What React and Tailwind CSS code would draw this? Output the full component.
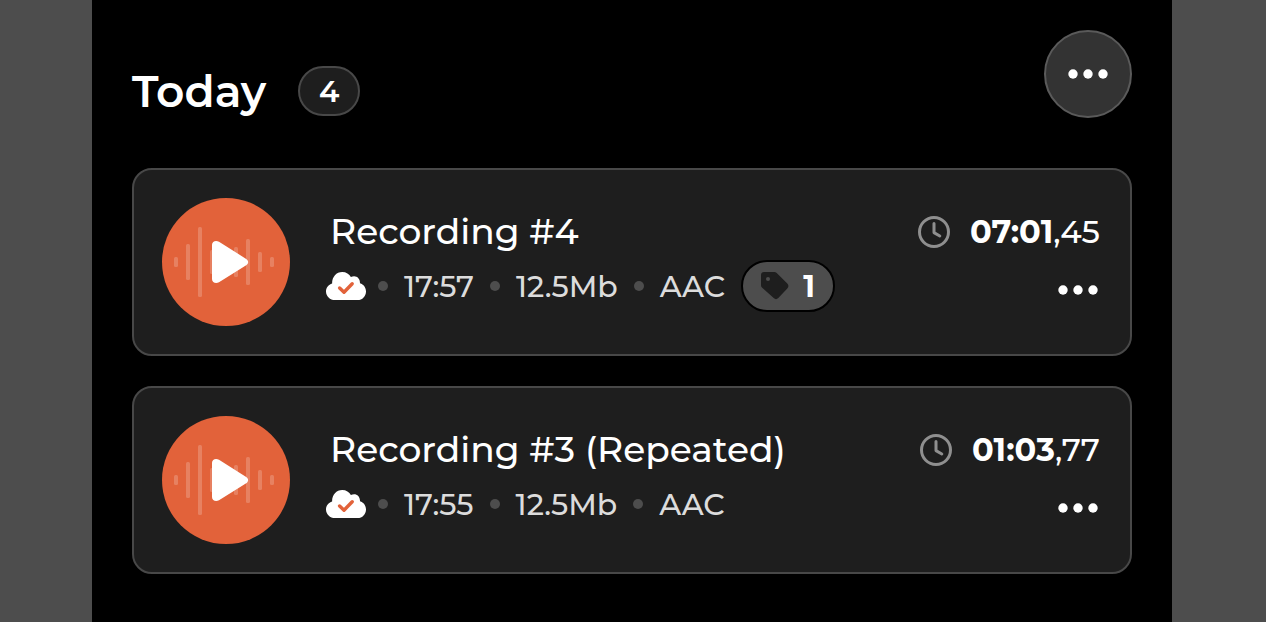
import React from "react";

const totalToday = 4;

const recordings = [
  {
    id: 4,
    title: "Recording #4",
    time: "17:57",
    size: "12.5Mb",
    format: "AAC",
    tags: 1,
    duration: "07:01",
    fraction: "45",
  },
  {
    id: 3,
    title: "Recording #3 (Repeated)",
    time: "17:55",
    size: "12.5Mb",
    format: "AAC",
    tags: 0,
    duration: "01:03",
    fraction: "77",
  },
];

// Three dots used by the menu buttons
const DotsIcon = () => (
  <svg width="40" height="10" viewBox="0 0 40 10" fill="currentColor" aria-hidden="true">
    <circle cx="5" cy="5" r="4.7" />
    <circle cx="20" cy="5" r="4.7" />
    <circle cx="35" cy="5" r="4.7" />
  </svg>
);

// Wave form with the play triangle on top
const PlayIcon = () => (
  <svg viewBox="0 0 128 128" className="h-full w-full" aria-hidden="true">
    <g fill="#fff" fillOpacity="0.2">
      <rect x="12" y="59" width="4" height="10" rx="1.5" />
      <rect x="24" y="46" width="4" height="36" rx="1.5" />
      <rect x="36" y="29" width="4" height="70" rx="1.5" />
      <rect x="48" y="52" width="4" height="24" rx="1.5" />
      <rect x="72" y="49" width="4" height="30" rx="1.5" />
      <rect x="84" y="41" width="4" height="46" rx="1.5" />
      <rect x="96" y="54" width="4" height="20" rx="1.5" />
      <rect x="108" y="59" width="4" height="10" rx="1.5" />
    </g>
    <path
      d="M50 47C50 43.4 53.8 41.8 57 43.8L84.2 60.9C86.8 62.5 86.8 65.6 84.2 67.2L57 84.3C53.8 86.2 50 84.6 50 81Z"
      fill="#fff"
    />
  </svg>
);

const CloudIcon = () => (
  <svg width="40" height="28" viewBox="0 0 40 28" className="shrink-0" aria-hidden="true">
    <path
      d="M9 28C4 28 0 24.2 0 19.4C0 15.5 2.6 12.5 6.1 11.4C6 4.8 10.4 0 16.2 0C20.2 0 23.3 2 24.9 5.1C29.6 2.7 34.2 5.9 34 11.2C37.6 12.2 40 15.5 40 19.4C40 24.2 36.4 28 31.6 28Z"
      fill="#fff"
    />
    <path
      d="M13.6 16L18 20.2L26.2 11.8"
      fill="none"
      stroke="#e2623a"
      strokeWidth="3.4"
      strokeLinecap="round"
      strokeLinejoin="round"
    />
  </svg>
);

const ClockIcon = () => (
  <svg
    width="32"
    height="32"
    viewBox="0 0 32 32"
    fill="none"
    stroke="#8f8f8f"
    className="shrink-0"
    aria-hidden="true"
  >
    <circle cx="16" cy="16" r="14.5" strokeWidth="3" />
    <path d="M16 7.4V16.6L21.8 20" strokeWidth="3" strokeLinecap="round" strokeLinejoin="round" />
  </svg>
);

const TagIcon = () => (
  <svg width="28" height="28" viewBox="0 0 28 28" className="shrink-0" aria-hidden="true">
    <path
      fillRule="evenodd"
      d="M3 0H13.2C14.2 0 15 .4 15.7 1L26.3 11.6C27.8 13.1 27.8 14.9 26.3 16.4L17.3 26C15.8 27.5 14.2 27.5 12.7 26L1.2 15.8C.4 15 0 14.2 0 13.2V3C0 1.2 1.2 0 3 0ZM7 5A2 2 0 1 0 7 9A2 2 0 1 0 7 5Z"
      fill="#1e1e1e"
    />
  </svg>
);

const Dot = () => <span className="h-2.5 w-2.5 shrink-0 rounded-full bg-[#4d4d4d]" />;

const RecordingCard = ({ item }) => {
  return (
    <li className="flex items-start rounded-[20px] border-2 border-[#484848] bg-[#1e1e1e] py-7 pr-[30px] pl-7">
      {/* Play button */}
      <button
        type="button"
        aria-label={`Play ${item.title}`}
        className="h-32 w-32 shrink-0 rounded-full bg-[#e2623a]"
      >
        <PlayIcon />
      </button>

      {/* Title and details */}
      <div className="ml-9 min-w-0 flex-1 pt-2">
        <h2 className="pl-1 text-[36px] leading-[50px] font-medium text-white">{item.title}</h2>
        <div className="mt-1 flex h-13 items-center text-[30px] font-medium text-[#dcdcdc]">
          <CloudIcon />
          <div className="ml-3 flex items-center gap-4">
            <Dot />
            <span>{item.time}</span>
            <Dot />
            <span>{item.size}</span>
            <Dot />
            <span>{item.format}</span>
            {item.tags > 0 && (
              <span className="flex h-13 items-center gap-3.5 rounded-full border-2 border-black bg-[#4d4d4d] px-[18px] font-bold text-white">
                <TagIcon />
                {item.tags}
              </span>
            )}
          </div>
        </div>
      </div>

      {/* Duration and menu */}
      <div className="flex shrink-0 flex-col items-end pt-2">
        <div className="flex h-13 items-center gap-5 text-[32px] font-medium text-white">
          <ClockIcon />
          <span>
            <b className="font-bold">{item.duration}</b>,{item.fraction}
          </span>
        </div>
        <button
          type="button"
          aria-label={`Options for ${item.title}`}
          className="mt-1.5 flex h-13 items-center px-0.5 text-white"
        >
          <DotsIcon />
        </button>
      </div>
    </li>
  );
};

const App = () => {
  return (
    <div className="min-h-screen bg-[#4d4d4d] pr-[94px] pl-[92px] font-['Montserrat','Inter',sans-serif]">
      <main className="min-h-screen bg-black px-10 pt-[30px] pb-12">
        {/* Section header */}
        <header className="flex items-end justify-between">
          <div className="flex items-center gap-8 pb-0.5">
            <h1 className="text-[44px] leading-[50px] font-semibold text-white">Today</h1>
            <span className="flex h-[50px] w-[62px] items-center justify-center rounded-full border-2 border-[#484848] bg-[#1e1e1e] text-[30px] font-semibold text-white">
              {totalToday}
            </span>
          </div>
          <button
            type="button"
            aria-label="More options"
            className="flex h-[88px] w-[88px] items-center justify-center rounded-full border-2 border-[#5a5a5a] bg-[#333333] text-white"
          >
            <DotsIcon />
          </button>
        </header>

        {/* Recordings list */}
        <ul className="mt-[50px] flex flex-col gap-[30px]">
          {recordings.map((item) => (
            <RecordingCard key={item.id} item={item} />
          ))}
        </ul>
      </main>
    </div>
  );
};

export default App;
